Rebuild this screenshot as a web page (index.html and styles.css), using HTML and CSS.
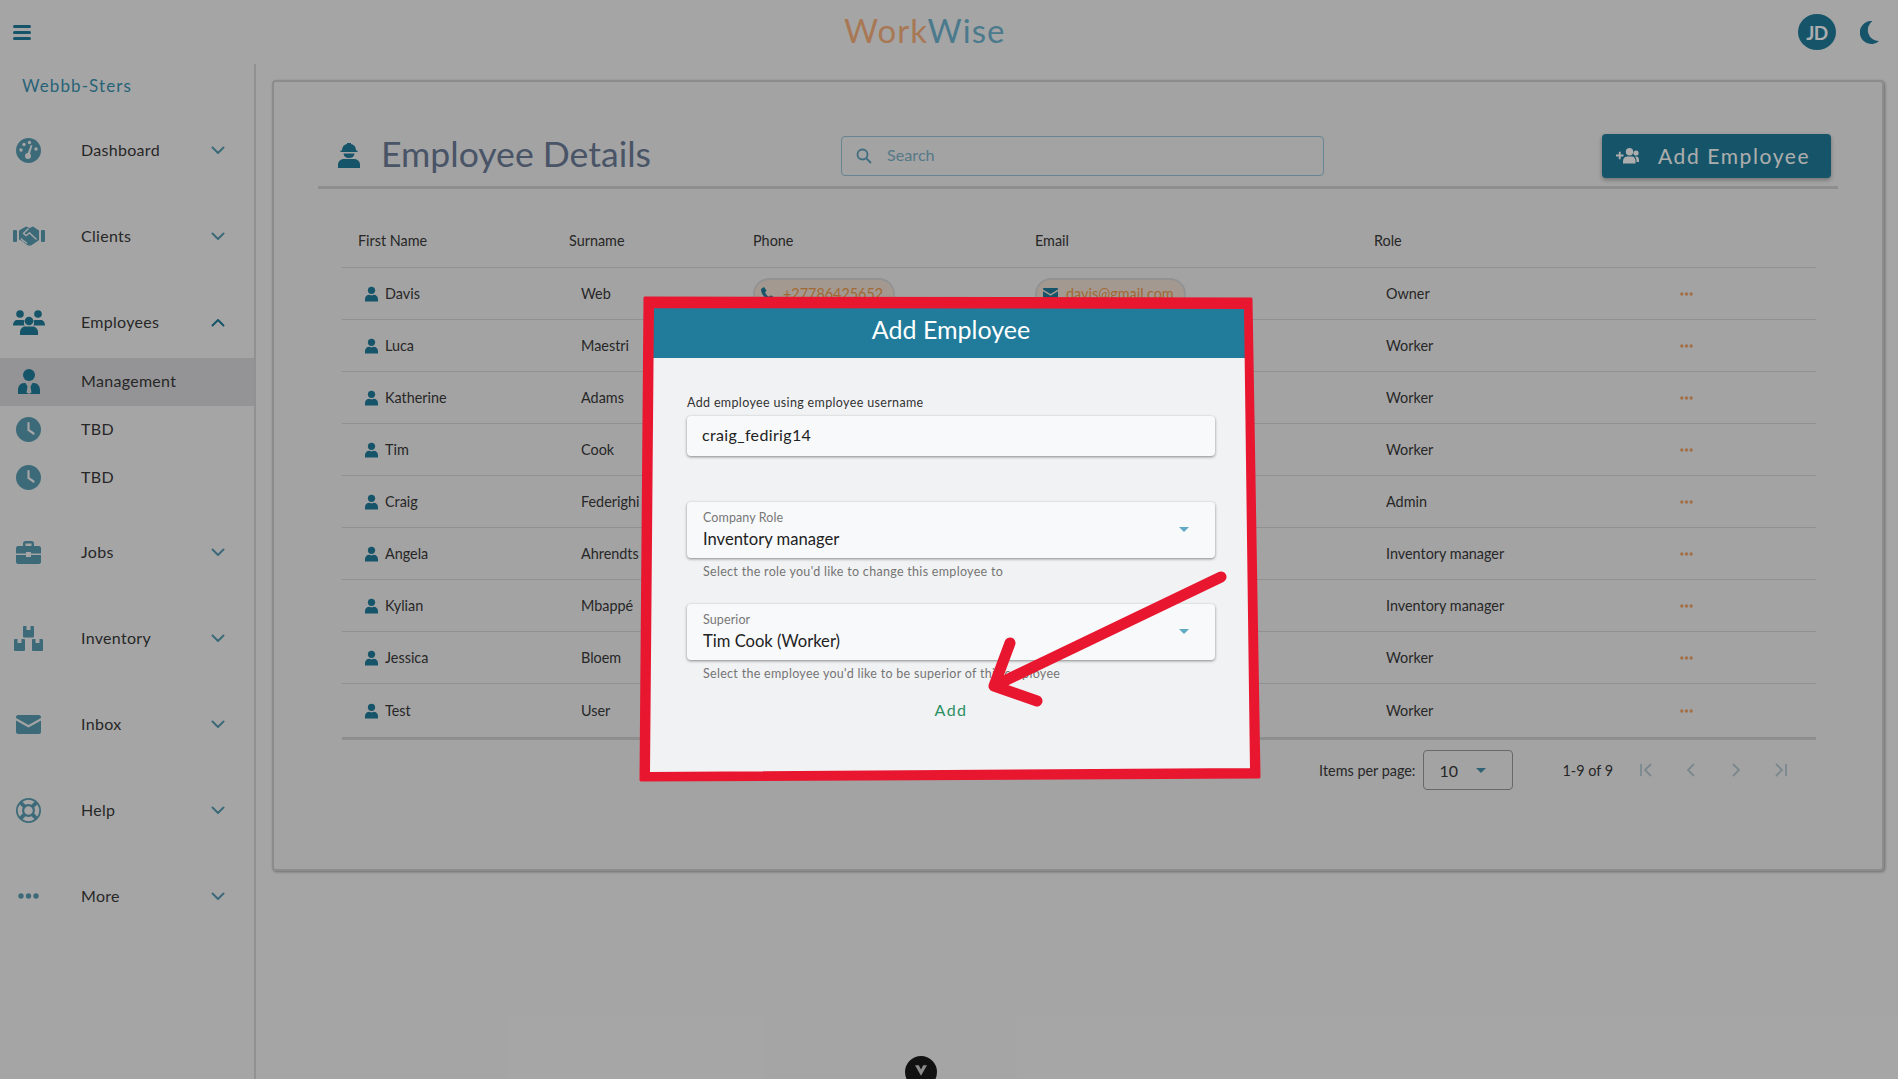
FILE: index.html
```html
<!DOCTYPE html>
<html lang="en">
<head>
<meta charset="utf-8">
<title>WorkWise</title>
<link rel="stylesheet" href="styles.css">
</head>
<body>
<svg class="sprite" width="0" height="0" aria-hidden="true">
  <symbol id="chev" viewBox="0 0 14 9"><path d="M1.5 1.5 7 7l5.500-5.500" fill="none" stroke="currentColor" stroke-width="2" stroke-linecap="round" stroke-linejoin="round"/></symbol>
  <symbol id="person" viewBox="0 0 14 16"><circle cx="7" cy="4" r="3.900"/><path d="M0 16v-2.500C0 10.500 2.200 8.700 4.500 8.700c1.600.8 3.400.8 5 0C11.800 8.700 14 10.500 14 13.500V16z"/></symbol>
  <symbol id="clock" viewBox="0 0 25 25"><circle cx="12.500" cy="12.500" r="12.500"/><path d="M12.500 6v7l5 3.500" fill="none" stroke="#f4f4f4" stroke-width="2.200" stroke-linecap="round"/></symbol>
  <symbol id="dots3" viewBox="0 0 21 6"><circle cx="3" cy="3" r="2.700"/><circle cx="10.500" cy="3" r="2.700"/><circle cx="18" cy="3" r="2.700"/></symbol>
  <symbol id="caret" viewBox="0 0 10 5"><path d="M0 0h10L5 5z"/></symbol>
</svg>

<div class="app">
  <header class="topbar">
    <button class="hamburger" aria-label="Menu"><span></span><span></span><span></span></button>
    <div class="brand"><span class="brand-a">Work</span><span class="brand-b">Wise</span></div>
    <div class="top-actions">
      <div class="avatar">JD</div>
      <svg class="moon" viewBox="0 0 19 23"><path d="M12.500 0A11.500 11.500 0 1 0 19 20 11 11 0 0 1 12.500 0z"/></svg>
    </div>
  </header>

  <div class="body-row">
    <aside class="sidebar">
      <div class="org">Webbb-Sters</div>
      <nav class="nav">
        <div class="nav-item">
          <span class="nav-icon soft"><svg width="25" height="25" viewBox="0 0 25 25"><circle cx="12.500" cy="12.500" r="12.500"/><g fill="#f4f4f4"><circle cx="5" cy="12" r="1.700"/><circle cx="8" cy="6.500" r="1.700"/><circle cx="13.500" cy="4.500" r="1.700"/><circle cx="20" cy="11" r="1.700"/><circle cx="12" cy="18" r="3"/><path d="M11 17l3.800-10 1.600.6-3 10z"/></g></svg></span>
          <span class="nav-label">Dashboard</span>
          <svg class="chev" width="14" height="9"><use href="#chev"/></svg>
        </div>
        <div class="nav-item">
          <span class="nav-icon soft"><svg width="32" height="20" viewBox="0 0 32 20"><rect x="0" y="4" width="4" height="12" rx="1"/><rect x="28" y="4" width="4" height="12" rx="1"/><path d="M6 4.500 13 .5l3.500 1.500L20 .5l6 4v9.500l-2 1.500-6 4h-3l-3-2-3-2.500-3-1.500z"/><path d="M15.500 2.500 10.500 7.500l2.500 2 3.500-2.500 7 6.500M11 15l3 2.500M8 12.500l3 3" fill="none" stroke="#f4f4f4" stroke-width="1.400"/></svg></span>
          <span class="nav-label">Clients</span>
          <svg class="chev" width="14" height="9"><use href="#chev"/></svg>
        </div>
        <div class="nav-item">
          <span class="nav-icon"><svg width="32" height="25" viewBox="0 0 32 25"><circle cx="7" cy="4" r="3.800"/><circle cx="25" cy="4" r="3.800"/><circle cx="16" cy="11" r="4.300"/><path d="M0 15.500c0-3 1.500-5.500 4-5.500h6c.6 0 1.200.2 1.700.5-.6 1-.9 2.200-.7 3.500.2 1 .8 1.800 1.300 1.500zM32 15.500c0-3-1.500-5.500-4-5.500h-6c-.6 0-1.200.2-1.700.5.600 1 .9 2.200.7 3.500-.2 1-.8 1.800-1.300 1.500z"/><path d="M7 25v-3c0-3 2.500-5.500 5-5.500h8c2.500 0 5 2.500 5 5.500v3z"/></svg></span>
          <span class="nav-label">Employees</span>
          <svg class="chev open" width="14" height="9"><use href="#chev"/></svg>
        </div>
        <div class="sub-list">
          <div class="sub-item active">
            <span class="nav-icon"><svg width="22" height="25" viewBox="0 0 22 25"><circle cx="11" cy="6" r="6"/><path d="M0 25v-4c0-4 2.500-7 6-7h1.500l2 3.500-1 6 2.500 1.500 2.500-1.500-1-6 2-3.500H16c3.500 0 6 3 6 7v4z"/></svg></span>
            <span class="nav-label">Management</span>
          </div>
          <div class="sub-item">
            <span class="nav-icon soft"><svg width="25" height="25"><use href="#clock"/></svg></span>
            <span class="nav-label">TBD</span>
          </div>
          <div class="sub-item">
            <span class="nav-icon soft"><svg width="25" height="25"><use href="#clock"/></svg></span>
            <span class="nav-label">TBD</span>
          </div>
        </div>
        <div class="nav-item">
          <span class="nav-icon soft"><svg width="25" height="23" viewBox="0 0 25 23"><path d="M7 5V2.500C7 1 8 0 9.500 0h6C17 0 18 1 18 2.500V5h-2.500V2.500h-6V5z"/><path d="M2 5h21c1 0 2 1 2 2v5.500H15v-1.500H10v1.500H0V7c0-1 1-2 2-2zM0 14h10v2h5v-2h10v7c0 1-1 2-2 2H2c-1 0-2-1-2-2z"/></svg></span>
          <span class="nav-label">Jobs</span>
          <svg class="chev" width="14" height="9"><use href="#chev"/></svg>
        </div>
        <div class="nav-item">
          <span class="nav-icon soft"><svg width="29" height="25" viewBox="0 0 29 25"><path d="M9 1c0-.5.500-1 1-1h2.500v4h4V0H19c.5 0 1 .5 1 1v9.500c0 .5-.5 1-1 1h-9c-.5 0-1-.5-1-1zM0 14c0-.5.500-1 1-1h2.500v4h4v-4H10c.5 0 1 .5 1 1v10c0 .5-.5 1-1 1H1c-.5 0-1-.5-1-1zM18 14c0-.5.500-1 1-1h2.500v4h4v-4H28c.5 0 1 .5 1 1v10c0 .5-.5 1-1 1h-9c-.5 0-1-.5-1-1z"/></svg></span>
          <span class="nav-label">Inventory</span>
          <svg class="chev" width="14" height="9"><use href="#chev"/></svg>
        </div>
        <div class="nav-item">
          <span class="nav-icon soft"><svg width="25" height="19" viewBox="0 0 25 19"><path d="M2 0h21c1 0 2 1 2 2v1L12.500 10 0 3V2C0 1 1 0 2 0zM0 5.500 12.500 12.500 25 5.500V17c0 1-1 2-2 2H2c-1 0-2-1-2-2z"/></svg></span>
          <span class="nav-label">Inbox</span>
          <svg class="chev" width="14" height="9"><use href="#chev"/></svg>
        </div>
        <div class="nav-item">
          <span class="nav-icon soft"><svg width="25" height="25" viewBox="0 0 25 25"><path fill-rule="evenodd" d="M12.500 0a12.500 12.500 0 1 0 0 25 12.500 12.500 0 0 0 0-25zm0 8.200a4.300 4.300 0 1 1 0 8.600 4.300 4.300 0 0 1 0-8.600zM6.500 3.800l3 3a7 7 0 0 1 6 0l3-3a10.500 10.500 0 0 0-12 0zM21.200 6.500l-3 3a7 7 0 0 1 0 6l3 3a10.500 10.500 0 0 0 0-12zM18.500 21.200l-3-3a7 7 0 0 1-6 0l-3 3a10.500 10.500 0 0 0 12 0zM3.800 18.500l3-3a7 7 0 0 1 0-6l-3-3a10.500 10.500 0 0 0 0 12z"/></svg></span>
          <span class="nav-label">Help</span>
          <svg class="chev" width="14" height="9"><use href="#chev"/></svg>
        </div>
        <div class="nav-item">
          <span class="nav-icon soft"><svg width="21" height="6"><use href="#dots3"/></svg></span>
          <span class="nav-label">More</span>
          <svg class="chev" width="14" height="9"><use href="#chev"/></svg>
        </div>
      </nav>
    </aside>

    <main class="main">
      <section class="card">
        <div class="card-head">
          <div class="title-wrap">
            <svg class="title-icon" width="22" height="25" viewBox="0 0 22 25"><path d="M4 7.500C4 3.800 6 1.600 9 1V0h4v1c3 .6 5 2.800 5 6.500h1.500V9h-17V7.500z"/><path d="M5.500 10.500h11C16.300 13.500 14 15 11 15s-5.300-1.500-5.500-4.500z"/><path d="M0 25v-3.500C0 18.500 2.500 16 6 16h10c3.500 0 6 2.500 6 5.500V25z"/></svg>
            <h1 class="title">Employee Details</h1>
          </div>
          <div class="search">
            <svg width="16" height="16" viewBox="0 0 16 16" class="search-icon"><circle cx="6.500" cy="6.500" r="5" fill="none" stroke="currentColor" stroke-width="1.800"/><path d="M10.500 10.500 15 15" stroke="currentColor" stroke-width="1.800"/></svg>
            <span class="search-ph">Search</span>
          </div>
          <div class="spacer"></div>
          <button class="add-btn">
            <svg width="23" height="16" viewBox="0 0 23 16"><path d="M0 6.500h2.800V3.700h1.900v2.800h2.800v1.900H4.700v2.800H2.800V8.400H0z"/><circle cx="13.500" cy="3.800" r="3.700"/><circle cx="20" cy="5" r="2.600"/><path d="M7 15.500v-2.500c0-2.500 2-4.500 4-4.500h5c2 0 3.500 2 3.500 4.500v2.500zM20.500 8.500H19c1 1.200 1.500 3 1.500 4.500V14H23v-2c0-2-1-3.500-2.500-3.500z"/></svg>
            <span>Add Employee</span>
          </button>
        </div>

        <div class="table">
          <div class="row head">
            <div>First Name</div><div>Surname</div><div>Phone</div><div>Email</div><div>Role</div><div></div>
          </div>
          <div class="row">
            <div class="c-name"><svg width="13" height="16"><use href="#person"/></svg>Davis</div>
            <div class="c-in">Web</div>
            <div><span class="chip"><svg width="14" height="14" viewBox="0 0 14 14"><path d="M3 0 5.500 3.500 4 5.500c.8 1.800 2.200 3.300 4 4.200l2-1.500L14 11l-2 3C6 14 0 8 0 2z"/></svg>+27786425652</span></div>
            <div><span class="chip"><svg width="15" height="12" viewBox="0 0 15 12"><path d="M1 0h13c.6 0 1 .5 1 1v.5L7.500 6 0 1.500V1c0-.5.400-1 1-1zM0 3.200 7.500 7.700 15 3.200V11c0 .6-.4 1-1 1H1c-.6 0-1-.4-1-1z"/></svg>davis@gmail.com</span></div>
            <div class="c-in">Owner</div>
            <div class="c-more"><svg width="13" height="4"><use href="#dots3"/></svg></div>
          </div>
          <div class="row">
            <div class="c-name"><svg width="13" height="16"><use href="#person"/></svg>Luca</div>
            <div class="c-in">Maestri</div><div></div><div></div>
            <div class="c-in">Worker</div>
            <div class="c-more"><svg width="13" height="4"><use href="#dots3"/></svg></div>
          </div>
          <div class="row">
            <div class="c-name"><svg width="13" height="16"><use href="#person"/></svg>Katherine</div>
            <div class="c-in">Adams</div><div></div><div></div>
            <div class="c-in">Worker</div>
            <div class="c-more"><svg width="13" height="4"><use href="#dots3"/></svg></div>
          </div>
          <div class="row">
            <div class="c-name"><svg width="13" height="16"><use href="#person"/></svg>Tim</div>
            <div class="c-in">Cook</div><div></div><div></div>
            <div class="c-in">Worker</div>
            <div class="c-more"><svg width="13" height="4"><use href="#dots3"/></svg></div>
          </div>
          <div class="row">
            <div class="c-name"><svg width="13" height="16"><use href="#person"/></svg>Craig</div>
            <div class="c-in">Federighi</div><div></div><div></div>
            <div class="c-in">Admin</div>
            <div class="c-more"><svg width="13" height="4"><use href="#dots3"/></svg></div>
          </div>
          <div class="row">
            <div class="c-name"><svg width="13" height="16"><use href="#person"/></svg>Angela</div>
            <div class="c-in">Ahrendts</div><div></div><div></div>
            <div class="c-in">Inventory manager</div>
            <div class="c-more"><svg width="13" height="4"><use href="#dots3"/></svg></div>
          </div>
          <div class="row">
            <div class="c-name"><svg width="13" height="16"><use href="#person"/></svg>Kylian</div>
            <div class="c-in">Mbappé</div><div></div><div></div>
            <div class="c-in">Inventory manager</div>
            <div class="c-more"><svg width="13" height="4"><use href="#dots3"/></svg></div>
          </div>
          <div class="row">
            <div class="c-name"><svg width="13" height="16"><use href="#person"/></svg>Jessica</div>
            <div class="c-in">Bloem</div><div></div><div></div>
            <div class="c-in">Worker</div>
            <div class="c-more"><svg width="13" height="4"><use href="#dots3"/></svg></div>
          </div>
          <div class="row last">
            <div class="c-name"><svg width="13" height="16"><use href="#person"/></svg>Test</div>
            <div class="c-in">User</div><div></div><div></div>
            <div class="c-in">Worker</div>
            <div class="c-more"><svg width="13" height="4"><use href="#dots3"/></svg></div>
          </div>
          <div class="pager">
            <span class="per-label">Items per page:</span>
            <div class="per-select"><span>10</span><svg width="10" height="5"><use href="#caret"/></svg></div>
            <span class="range">1-9 of 9</span>
            <div class="pager-btns">
              <svg width="24" height="24" viewBox="0 0 24 24"><path d="M7 6v12M17 6l-6 6 6 6" fill="none" stroke="currentColor" stroke-width="1.800"/></svg>
              <svg width="24" height="24" viewBox="0 0 24 24"><path d="m15 6-6 6 6 6" fill="none" stroke="currentColor" stroke-width="1.800"/></svg>
              <svg width="24" height="24" viewBox="0 0 24 24"><path d="m9 6 6 6-6 6" fill="none" stroke="currentColor" stroke-width="1.800"/></svg>
              <svg width="24" height="24" viewBox="0 0 24 24"><path d="M17 6v12M7 6l6 6-6 6" fill="none" stroke="currentColor" stroke-width="1.800"/></svg>
            </div>
          </div>
        </div>
      </section>
    </main>
  </div>
</div>

<div class="backdrop"></div>

<div class="modal">
  <div class="modal-head">Add Employee</div>
  <div class="modal-body">
    <label class="field-label">Add employee using employee username</label>
    <div class="input">craig_fedirig14</div>
    <div class="select first">
      <div class="select-text"><span class="select-label">Company Role</span><span class="select-value">Inventory manager</span></div>
      <svg width="10" height="5"><use href="#caret"/></svg>
    </div>
    <div class="hint">Select the role you'd like to change this employee to</div>
    <div class="select second">
      <div class="select-text"><span class="select-label">Superior</span><span class="select-value">Tim Cook (Worker)</span></div>
      <svg width="10" height="5"><use href="#caret"/></svg>
    </div>
    <div class="hint">Select the employee you'd like to be superior of this employee</div>
    <div class="modal-actions"><button class="add-link">Add</button></div>
  </div>
</div>

<svg class="annotation" width="1898" height="1079" viewBox="0 0 1898 1079" aria-hidden="true">
  <path fill="#e8172f" fill-rule="evenodd" stroke="#e8172f" stroke-width="3" stroke-linejoin="round" d="M645 298 1251 299 1259 777 641 780zM652.500 306.500 1245.500 307.500 1251.500 769.500 648.500 773.500z"/>
  <path d="M1221 577 994 686M1010 643 994 686 1037 701" fill="none" stroke="#e8172f" stroke-width="11" stroke-linecap="round" stroke-linejoin="round"/>
</svg>

<div class="fab"><svg width="12" height="11" viewBox="0 0 16 14"><path d="M0 0h5l3 5.500L11 0h5L8 14z" fill="#8a8a8a"/></svg></div>
</body>
</html>
```

FILE: styles.css
```css
* { box-sizing: border-box; }
html, body { margin: 0; padding: 0; height: 100%; overflow: hidden; }
body {
  position: relative;
  width: 1898px;
  height: 1079px;
  background: #f4f4f4;
  font-family: Lato, "Open Sans", "Liberation Sans", sans-serif;
  color: #333;
  font-size: 14px;
}
.sprite { position: absolute; }
button { font: inherit; border: 0; background: none; padding: 0; }

/* top bar */
.app { display: flex; flex-direction: column; height: 100%; }
.topbar {
  height: 64px;
  flex: none;
  display: grid;
  grid-template-columns: 831px auto 1fr;
  align-items: center;
  padding: 0 19px 0 13px;
}
.hamburger { display: flex; flex-direction: column; gap: 3px; width: 18px; justify-self: start; }
.hamburger span { display: block; height: 3px; border-radius: 2px; background: #217c9b; }
.brand { font-size: 33px; font-weight: 400; letter-spacing: 1.100px; line-height: 40px; margin-top: -5px; }
.brand-a { color: #f8b27e; }
.brand-b { color: #6fb4d0; }
.top-actions { display: flex; align-items: center; gap: 24px; justify-self: end; }
.avatar {
  width: 38px; height: 36px; border-radius: 50%;
  background: #217c9b; color: #fff;
  display: flex; align-items: center; justify-content: center;
  font-size: 19px; font-weight: 700; letter-spacing: -.5px;
}
.moon { width: 19px; height: 23px; fill: #217c9b; }

/* sidebar */
.body-row { flex: 1; display: flex; min-height: 0; }
.sidebar { width: 256px; flex: none; border-right: 2px solid #d6d6d6; }
.org { padding: 12px 0 0 22px; font-size: 17px; letter-spacing: 1.100px; line-height: 20px; color: #3a93b2; }
.nav { display: flex; flex-direction: column; gap: 14px; padding-top: 18px; }
.nav-item { height: 72px; display: flex; align-items: center; padding-right: 29px; }
.sub-list { display: flex; flex-direction: column; margin-top: -14px; }
.sub-item { height: 48px; display: flex; align-items: center; padding-bottom: 2px; }
.sub-item.active { background: #dadbde; }
.nav-icon { width: 57px; margin-right: 24px; flex: none; display: flex; justify-content: center; fill: #217c9b; }
.nav-icon.soft { opacity: .72; }
.nav-icon svg { display: block; }
.nav-label { flex: 1; font-size: 16px; letter-spacing: .3px; color: #3a3a3a; padding-bottom: 2px; }
.chev { color: #217c9b; opacity: .72; flex: none; }
.chev.open { transform: rotate(180deg); opacity: 1; }

/* card */
.main { flex: 1; padding: 16px 14px 0 16px; min-width: 0; }
.card {
  height: 791px;
  background: #f0f0f1;
  border: 2px solid #cfcfd0;
  border-radius: 4px;
  box-shadow: 1px 1px 3px rgba(0,0,0,.35);
  padding-top: 52px;
}
.card-head {
  margin: 0 44px 0 44px;
  height: 55px;
  padding-right: 7px;
  border-bottom: 3px solid #d2d2d3;
  display: grid;
  grid-template-columns: 523px 483px 1fr 229px;
  align-items: start;
}
.title-wrap { display: flex; align-items: center; gap: 21px; padding: 0 0 2px 20px; height: 42px; }
.title-icon { fill: #217c9b; flex: none; margin-top: 3px; }
.title { margin: 0; font-size: 35.600px; font-weight: 400; line-height: 42px; color: #6c7d99; white-space: nowrap; }
.search {
  height: 40px; margin-top: 2px;
  border: 1px solid #94c4d6; border-radius: 4px;
  display: flex; align-items: center; gap: 15px; padding-left: 14px;
  color: #7fb3c7;
}
.search-icon { flex: none; color: #5fa2bb; }
.search-ph { font-size: 16.200px; padding-bottom: 3px; }
.add-btn {
  height: 44px; background: #217c9b; color: #fff;
  border-radius: 4px;
  box-shadow: 0 2px 4px rgba(0,0,0,.3);
  display: flex; align-items: center; gap: 19px; padding-left: 14px;
  font-size: 21px; letter-spacing: 1.600px;
}
.add-btn span { padding-bottom: 2px; }
.add-btn svg { fill: #fff; flex: none; }

/* table */
.table { margin: 25px 0 0 68px; width: 1474px; }
.row {
  display: grid;
  grid-template-columns: 211px 184px 282px 339px 306px 152px;
  height: 52px;
  border-bottom: 1px solid #d4d5d6;
  align-items: center;
  font-size: 14.400px;
  color: #3a3a3a;
}
.row > div { padding-left: 16px; white-space: nowrap; }
.row.head { height: 54px; }
.row.last { border-bottom: 3px solid #d2d2d3; height: 56px; }
.row > .c-name { padding-left: 23px; display: flex; align-items: center; gap: 7px; }
.c-name svg { fill: #217c9b; flex: none; }
.row > .c-in { padding-left: 28px; }
.row > .c-more { padding-left: 0; }
.c-more svg { fill: #f0a468; display: block; margin-left: 16px; }
.chip {
  display: inline-flex; align-items: center; gap: 8px;
  height: 32px; padding: 0 10px 0 6px;
  border: 2px solid #d8d8d8; border-radius: 16px;
  background: #f0e2d6; color: #ef9a4a;
}
.row > div:nth-child(3),
.row > div:nth-child(4) { padding-left: 16px; }
.chip svg { fill: #217c9b; flex: none; }

/* pager */
.pager { display: flex; justify-content: flex-end; align-items: center; height: 52px; margin-top: 4px; font-size: 14.400px; color: #3a3a3a; padding-right: 23px; }
.per-label { margin-right: 8px; }
.per-select {
  width: 90px; height: 40px; margin-right: 49px;
  border: 1px solid #9a9a9a; border-radius: 4px;
  display: flex; align-items: center; gap: 18px; padding-left: 15px; font-size: 16px;
}
.per-select svg { fill: #217c9b; opacity: .8; }
.range { margin-right: 21px; }
.pager-btns { display: flex; gap: 21px; color: #b4c9d1; }
.pager-btns svg { display: block; }

/* overlay */
.backdrop { position: absolute; inset: 0; background: rgba(0,0,0,.32); }
.modal {
  position: absolute; left: 644px; top: 300px; width: 614px; height: 476px;
  background: #f1f2f4;
  color: #333;
  clip-path: polygon(3px 0, 605px 0, 614px 476px, 0 476px);
}
.modal-head {
  height: 58px; background: #217c9b; color: #fff;
  display: flex; align-items: center; justify-content: center;
  font-size: 25px; padding-bottom: 1px;
}
.modal-body { padding: 37px 43px 0; }
.field-label { display: block; font-size: 12.500px; line-height: 16px; letter-spacing: .35px; color: #333; }
.input {
  height: 40px; margin-top: 5px; padding: 0 15px 3px;
  background: #f8f9fb; border-radius: 4px;
  box-shadow: 0 1px 3px rgba(0,0,0,.45);
  display: flex; align-items: center;
  font-size: 16px; letter-spacing: .35px; color: #222;
}
.select {
  height: 56px; padding: 0 26px 0 16px;
  background: #f8f9fb; border-radius: 4px;
  box-shadow: 0 1px 3px rgba(0,0,0,.45);
  display: flex; align-items: center; justify-content: space-between;
}
.select.first { margin-top: 46px; }
.select.second { margin-top: 24px; }
.select svg { fill: #5fa9c4; margin-top: -1px; }
.select-text { display: flex; flex-direction: column; }
.select-label { font-size: 12.500px; line-height: 16px; letter-spacing: .1px; color: #777; }
.select-value { font-size: 16.600px; line-height: 22px; margin-top: 2px; color: #222; }
.hint { margin: 6px 0 0 16px; font-size: 12.500px; line-height: 16px; letter-spacing: .3px; color: #757575; }
.modal-actions { display: flex; justify-content: center; margin-top: 9px; }
.add-link { height: 36px; padding: 0 16px; font-size: 16px; letter-spacing: 1.400px; color: #2b8f62; }
.annotation { position: absolute; left: 0; top: 0; pointer-events: none; }
.fab {
  position: absolute; left: 905px; top: 1056px; width: 32px; height: 32px;
  border-radius: 50%; background: #111;
  display: flex; justify-content: center; padding-top: 9px;
}
```
